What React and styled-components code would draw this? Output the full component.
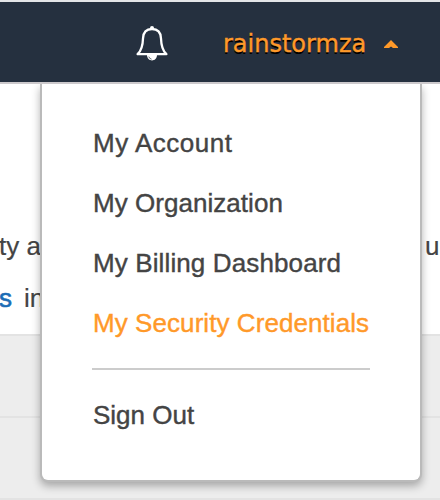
import React from "react";
import styled, { createGlobalStyle } from "styled-components";

const GlobalStyle = createGlobalStyle`
  * { box-sizing: border-box; }
  body {
    margin: 0;
    background: #fff;
    font-family: "Liberation Sans", Arial, sans-serif;
    overflow: hidden;
  }
`;

const Page = styled.div`
  position: relative;
  width: 440px;
  height: 500px;
  overflow: hidden;
  display: flex;
  flex-direction: column;
  color: #444;
`;

const Header = styled.header`
  flex: none;
  display: flex;
  align-items: center;
  height: 84px;
  padding-left: 135px;
  background: #25303f;
  border-top: 2px solid #e3e5e7;
  border-bottom: 2px solid #ccc9cc;
`;

const BellIcon = styled.svg`
  flex: none;
  width: 34px;
  height: 38px;
  margin-top: 2px;
`;

const UserButton = styled.div`
  display: flex;
  align-items: center;
  gap: 18px;
  margin-left: 54px;
  color: #ff9929;
`;

const UserName = styled.span`
  padding-top: 4px;
  font: 24px/30px "DejaVu Sans", Verdana, sans-serif;
  -webkit-text-stroke: 0.4px #ff9929;
  text-shadow: 0 2px 0 #000;
`;

const Caret = styled.svg`
  width: 14px;
  height: 8px;
  margin-top: 4px;
`;

const Article = styled.main`
  flex: none;
  height: 250px;
  padding-top: 136px;
  font-size: 26px;
  line-height: 52px;
`;

const Line = styled.div`
  display: flex;
  height: 52px;
  white-space: pre;
`;

const Fragment = styled.span`
  margin-left: ${(p) => p.$left}px;
  -webkit-text-stroke: 0.2px currentColor;
`;

const LinkFragment = styled(Fragment)`
  color: #1b6cb5;
  -webkit-text-stroke: 0.6px #1b6cb5;
`;

const GreyRow = styled.div`
  flex: none;
  height: ${(p) => p.$height}px;
  background: #ededed;
  border-top: 2px solid #e3e3e3;
`;

const Menu = styled.nav`
  position: absolute;
  top: 84px;
  left: 40px;
  width: 382px;
  height: 398px;
  padding: 29px 50px 0;
  background: #fff;
  border: 2px solid #bababa;
  border-top: 0;
  border-radius: 0 0 8px 8px;
  box-shadow: 0 4px 8px rgba(0, 0, 0, 0.3);
  clip-path: inset(0 -16px -20px -16px);
`;

const MenuItem = styled.div`
  height: 60px;
  padding-left: 1px;
  font-size: 26px;
  line-height: 60px;
  letter-spacing: ${(p) => p.$spacing || 0}px;
  white-space: nowrap;
  color: ${(p) => (p.$active ? "#ff9929" : "#444")};
  -webkit-text-stroke: 0.4px currentColor;
`;

const Divider = styled.hr`
  height: 2px;
  margin: 15px 0;
  border: 0;
  background: #ccc;
`;

export default function App() {
  return (
    <>
      <GlobalStyle />
      <Page>
        <Header>
          <BellIcon viewBox="0 0 34 38" fill="none" stroke="#fff" strokeWidth="2.3" strokeLinejoin="round">
            <path d="M17 5C10.5 5 8.2 9.2 8 14.5C7.8 21.5 6.6 26.5 2.6 30.2H31.4C27.4 26.5 26.2 21.5 26 14.5C25.8 9.2 23.5 5 17 5Z" />
            <circle cx="17" cy="4" r="2" fill="#fff" stroke="none" />
            <path d="M12 31C12 38.2 22 38.2 22 31Z" fill="#fff" stroke="none" />
            <path d="M13.8 32.6Q14.4 34.8 16.6 35.2" stroke="#68717b" strokeWidth="1" />
          </BellIcon>
          <UserButton>
            <UserName>rainstormza</UserName>
            <Caret viewBox="0 0 14 8">
              <path d="M7 0L14 7V8H9L7 6.4L5 8H0V7Z" fill="#ff9929" />
            </Caret>
          </UserButton>
        </Header>
        <Article>
          <Line>
            <Fragment $left={-1}>ty a</Fragment>
            <Fragment $left={384}>u</Fragment>
          </Line>
          <Line>
            <LinkFragment $left={-1}>s</LinkFragment>
            <Fragment $left={12}>in</Fragment>
          </Line>
        </Article>
        <GreyRow $height={82} />
        <GreyRow $height={82} />
        <GreyRow $height={2} />
        <Menu>
          <MenuItem $spacing={0.5}>My Account</MenuItem>
          <MenuItem $spacing={0.04}>My Organization</MenuItem>
          <MenuItem $spacing={0.12}>My Billing Dashboard</MenuItem>
          <MenuItem $active $spacing={0.07}>My Security Credentials</MenuItem>
          <Divider />
          <MenuItem>Sign Out</MenuItem>
        </Menu>
      </Page>
    </>
  );
}
